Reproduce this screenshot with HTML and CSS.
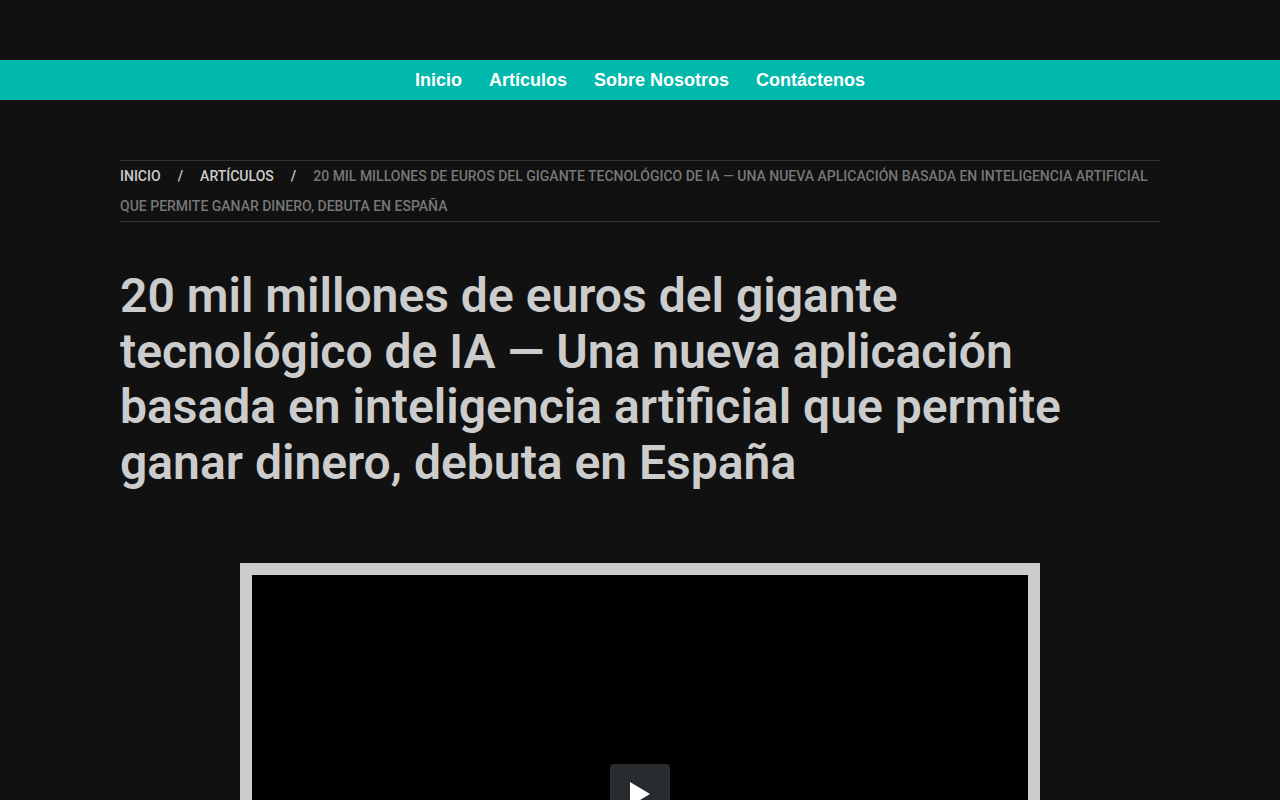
FILE: index.html
```html
<!DOCTYPE html>
<html lang="es">
<head>
    <meta charset="UTF-8">
    <meta name="viewport" content="width=device-width, initial-scale=1.0">
    <title>20 mil millones de euros del gigante tecnológico de IA</title>
    <link rel="stylesheet" href="styles.css">
</head>
<body>
    <!-- Main menu -->
    <header class="site-header">
        <nav class="main-menu">
            <a href="#">Inicio</a>
            <a href="#">Artículos</a>
            <a href="#">Sobre Nosotros</a>
            <a href="#">Contáctenos</a>
        </nav>
    </header>

    <main class="container">
        <nav class="breadcrumb">
            <a href="#">Inicio</a><span class="separator">/</span><a href="#">Artículos</a><span class="separator">/</span><span class="current">20 mil millones de euros del gigante tecnológico de IA — Una nueva aplicación basada en inteligencia artificial que permite ganar dinero, debuta en España</span>
        </nav>

        <h1>20 mil millones de euros del gigante tecnológico de IA — Una nueva aplicación basada en inteligencia artificial que permite ganar dinero, debuta en España</h1>

        <!-- Video player -->
        <div class="video">
            <button type="button" class="play" aria-label="Reproducir">
                <svg width="20" height="24" viewBox="0 0 20 24"><path d="M0 0L20 12L0 24Z" fill="#fff"/></svg>
            </button>
        </div>
    </main>
</body>
</html>
```
FILE: styles.css
```css
* {
    box-sizing: border-box;
}

body {
    margin: 0;
    background: #111;
    color: #ccc;
    font-family: Roboto, sans-serif;
    overflow-x: hidden;
}

a {
    color: inherit;
    text-decoration: none;
}

.site-header {
    padding-top: 60px;
}

.main-menu {
    display: flex;
    justify-content: center;
    gap: 27px;
    background: #00b8ab;
    color: #fff;
    font-family: "Liberation Sans", Arial, sans-serif;
    font-size: 18px;
    font-weight: bold;
    line-height: 40px;
}

.container {
    max-width: 1080px;
    margin: 0 auto;
    padding: 60px 20px;
}

/* Breadcrumb */
.breadcrumb {
    border-top: 1px solid #333;
    border-bottom: 1px solid #333;
    font-size: 14px;
    font-weight: 500;
    line-height: 30px;
    text-transform: uppercase;
}

.separator {
    margin: 0 17px;
}

.current {
    color: #777;
}

h1 {
    margin: 46px 0 72px;
    font-size: 48px;
    font-weight: 600;
    line-height: 1.16;
}

/* Video player */
.video {
    display: flex;
    align-items: center;
    justify-content: center;
    max-width: 800px;
    aspect-ratio: 800 / 463;
    margin: 0 auto;
    background: #000;
    border: 12px solid #ccc;
}

.play {
    display: flex;
    align-items: center;
    justify-content: center;
    width: 60px;
    height: 60px;
    padding: 0;
    background: #282c2e;
    border: none;
    border-radius: 4px;
    cursor: pointer;
}
```
